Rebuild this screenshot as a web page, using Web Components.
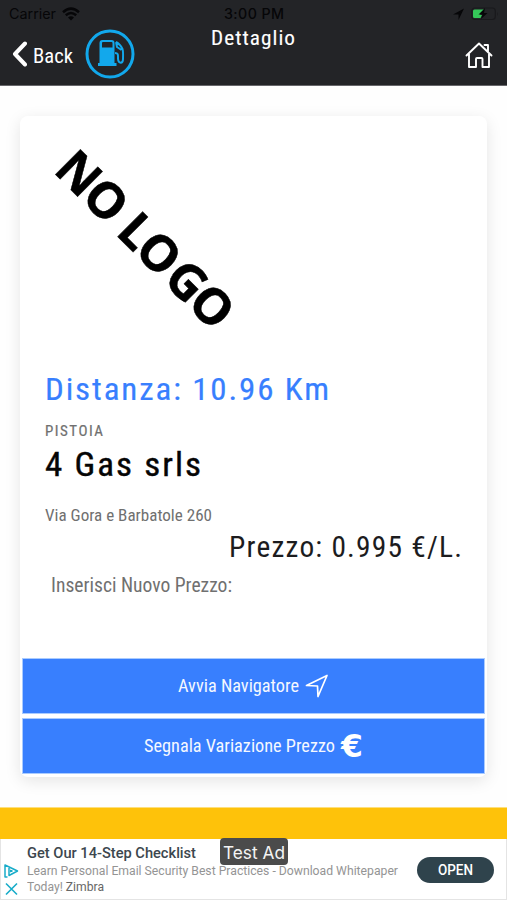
<!DOCTYPE html>
<html lang="it">
<head>
<meta charset="utf-8">
<title>Dettaglio</title>
<style>
html,body{margin:0;height:900px;overflow:hidden;background:#fefefe}
</style>
</head>
<body>
<station-page></station-page>
<script>
const define = (name, html, ready) => customElements.define(name, class extends HTMLElement {
  connectedCallback() {
    if (this.shadowRoot) return;
    const t = document.createElement('template');
    t.innerHTML = html;
    this.attachShadow({mode: 'open'}).append(t.content.cloneNode(true));
    if (ready) ready(this);
  }
});

/* One line of text condensed horizontally to the width given in "w". */
define('fit-line', `<style>
:host{display:block;white-space:pre;height:var(--lh,1.2em);line-height:var(--lh,1.2em);font-family:"Roboto Condensed",Roboto,sans-serif}
span{display:inline-block;transform-origin:0 50%}
</style><span><slot></slot></span>`, el => {
  const w = +el.getAttribute('w'), s = el.shadowRoot.querySelector('span');
  const fit = () => {
    s.style.transform = 'none';
    el.style.width = w + 'px';
    const ls = parseFloat(getComputedStyle(el).letterSpacing) || 0;
    s.style.transform = 'scaleX(' + w / (s.getBoundingClientRect().width - ls) + ')';
  };
  fit();
  requestAnimationFrame(fit);
});

define('status-bar', `<style>
:host{display:flex;height:27px;align-items:center;color:#060608;padding:0 8px 0 9px;box-sizing:border-box}
fit-line{font-size:14px;--lh:27px;font-family:Inter,sans-serif}
.wifi{margin-left:6px}.time{margin-left:144px;font-weight:500;letter-spacing:.4px}
.loc{margin-left:170px}.bat{margin-left:7px}
svg{display:block;flex:none}
</style>
<fit-line w="47">Carrier</fit-line>
<svg class="wifi" width="18" height="14" viewBox="0 0 18 14" fill="none" stroke="currentColor" stroke-width="2.5"><path d="M1 5.2Q9-2 17 5.2M3.8 8.2Q9 3.7 14.2 8.2"/><path d="M6 10.6Q9 8 12 10.6L9 13.5z" fill="currentColor" stroke="none"/></svg>
<fit-line class="time" w="60">3:00 PM</fit-line>
<svg class="loc" width="11" height="12" viewBox="0 0 11 12"><path d="M0 6.5 11 .5 5.5 12V6.5z" fill="currentColor"/></svg>
<svg class="bat" width="28" height="14" viewBox="0 0 28 14"><rect x=".8" y="1" width="23.5" height="11.5" rx="3" fill="none" stroke="#19191c" stroke-width="1.2"/><path d="M3.5 2.5H13L9 8h2l-1.500 3H3.500q-1.500 0-1.500-1.500V4q0-1.500 1.500-1.500z" fill="#35c759"/><path d="M14 1 7.500 7.500h4L10 12l6.500-6H13z" fill="#060608"/><path d="M26 5v4q1.500-2 0-4z" fill="#19191c"/></svg>`);

define('app-header', `<style>
:host{display:block;height:86px;background:#232427;color:#fff;border-bottom:1px solid #66666a;box-sizing:border-box}
.row{display:grid;grid-template-columns:211px 1fr 30px;height:58px;padding-right:13px}
.left{display:flex;align-items:center;padding:0 0 4px 12px}
.back{margin:3px 0 0 6px;font-size:20.5px;--lh:30px}
.logo{margin-left:12px}
.title{font-size:20.5px;letter-spacing:1px;--lh:24px;margin-top:-1px;-webkit-text-stroke:.12px}
.home{align-self:center;margin-top:-2px}
svg{display:block;flex:none}
</style>
<status-bar></status-bar>
<div class="row">
<div class="left">
<svg width="15" height="26" viewBox="0 0 15 26" fill="none" stroke="#fff" stroke-width="4" stroke-linecap="round" stroke-linejoin="round"><path d="M13 2.500 3 13 13 23.500"/></svg>
<fit-line class="back" w="40">Back</fit-line>
<svg class="logo" width="50" height="50" viewBox="0 0 50 50"><circle cx="25" cy="25" r="23" fill="none" stroke="#12a8ec" stroke-width="3"/><g fill="#12a8ec"><path fill-rule="evenodd" d="M14.500 14q0-3 3-3h9q3 0 3 3v21h-15zM17 14v4.500h10.500V14q0-1-1-1h-8.500q-1 0-1 1z"/><path d="M13 34h18.500v3H13z"/></g><path d="M31 13q4 2 6.500 7 .8 2 .5 10c0 5-4.500 5-5 0 0-4 .5-6-3-6M31 13l1 5 4.500 3" fill="none" stroke="#12a8ec" stroke-width="2"/></svg>
</div>
<fit-line class="title" w="84">Dettaglio</fit-line>
<svg class="home" width="30" height="30" viewBox="0 0 30 30" fill="none" stroke="#fff" stroke-width="1.900" stroke-linejoin="round" stroke-linecap="round"><path d="M2.500 15.500 15 3.500l12.500 12M5 14v13h7v-8q0-1 1-1h4.500q1 0 1 1v8H25V14M20.500 5h3.500v7"/></svg>
</div>`);

define('no-logo', `<style>
:host{display:block;width:210px;height:210px}
svg{display:block;overflow:visible}
text{font:bold 49.500px "Open Sans","Noto Sans",sans-serif;stroke:#000;stroke-width:.5px}
</style>
<svg width="210" height="210"><text transform="translate(6.500 40.500) rotate(45)" x="1 39.800 80 89.200 114.800 156 189.900">NO LOGO</text></svg>`);

define('action-button', `<style>
:host{display:flex;height:54px;align-items:center;justify-content:center;background:#387ffe;color:#f4f8ff;box-shadow:0 0 0 1px #a9cbff;font-size:18.700px;--lh:55px}
</style><slot></slot>`);

define('station-card', `<style>
:host{display:flex;flex-direction:column;margin:30px 20px 0;height:661px;border-radius:8px;background:#fff;box-shadow:0 4px 16px rgba(0,0,0,.10);box-sizing:border-box;padding:14px 3px 4px}
.body{display:flex;flex-direction:column;padding:0 22px;height:529px;box-sizing:border-box}
.dist{font-size:31.500px;letter-spacing:1.800px;color:#387ffe;--lh:38px;margin-top:31px;-webkit-text-stroke:.2px}
.city{font-size:15px;letter-spacing:1.500px;color:#707070;--lh:20px;margin-top:12px;-webkit-text-stroke:.2px}
.name{font-size:34px;letter-spacing:2px;color:#050505;--lh:40px;margin-top:3px;-webkit-text-stroke:.4px}
.addr{font-size:17px;color:#707070;--lh:22px;margin-top:20px}
.price{font-size:29px;letter-spacing:1.200px;color:#1c1c1e;--lh:36px;margin:3px 0 0 184px}
.ins{font-size:19.600px;color:#707070;--lh:26px;margin:8px 0 0 6px}
.btns{display:flex;flex-direction:column;gap:6px;margin-top:1px}
svg{display:block}
.arrow{margin-left:6px}.euro{font:bold 31.500px/55px "DejaVu Sans",sans-serif;margin-left:6px;color:#fff;width:22px;height:54px}
</style>
<div class="body">
<no-logo></no-logo>
<fit-line class="dist" w="284">Distanza: 10.96 Km</fit-line>
<fit-line class="city" w="58">PISTOIA</fit-line>
<fit-line class="name" w="156">4 Gas srls</fit-line>
<fit-line class="addr" w="167">Via Gora e Barbatole 260</fit-line>
<fit-line class="price" w="233">Prezzo: 0.995 €/L.</fit-line>
<fit-line class="ins" w="181">Inserisci Nuovo Prezzo:</fit-line>
</div>
<div class="btns">
<action-button><fit-line w="121">Avvia Navigatore</fit-line><svg class="arrow" width="24" height="24" viewBox="0 0 24 24" fill="none" stroke="#fff" stroke-width="1.700" stroke-linejoin="round"><path d="M1.500 11.500 22 1.500 13 22.500l-.5-10.500z"/></svg></action-button>
<action-button><fit-line w="191">Segnala Variazione Prezzo</fit-line><span class="euro">€</span></action-button>
</div>`);

define('ad-banner', `<style>
:host{display:grid;grid-template-columns:27px 1fr 77px;height:61px;background:#fff;position:relative;border:1px solid #e4e4e4;border-width:0 1px 1px;box-sizing:border-box;padding-right:12px}
fit-line{font-family:Roboto,sans-serif}
.icons{display:flex;flex-direction:column;gap:4px;padding:25px 0 0 3px}
.copy{padding-top:5px;margin-left:-1px}
.head{font-size:14.500px;font-weight:500;color:#3c474e;--lh:19px}
.d{font-size:12.300px;color:#949494;--lh:16px}
.d b{font-weight:400;color:#666}
.open{align-self:start;margin-top:18px;height:26px;border-radius:13px;background:#2f434c;color:#fff;display:flex;justify-content:center;font-size:14px;font-weight:500;--lh:26px}
.tag{position:absolute;left:219px;top:-1px;width:68px;height:27px;border-radius:4px;background:#4b4b4b;color:#f4f4f4;display:flex;justify-content:center;font-size:17.500px;--lh:29px}
.tag fit-line{font-family:Inter,sans-serif}
svg{display:block}
</style>
<div class="icons">
<svg width="15" height="14" viewBox="0 0 15 14" fill="none" stroke="#18acc9" stroke-width="1.500" stroke-linejoin="round"><path d="M3.500 13H1V1l12.500 6L5 11.500V4"/><path d="M6.500 6 8.500 7 6.500 8z" fill="#18acc9" stroke-width="1"/></svg>
<svg width="15" height="14" viewBox="0 0 15 14" stroke="#18acc9" stroke-width="1.600"><path d="M2 1.500 13 12.500M13 1.500 2 12.500"/></svg>
</div>
<div class="copy">
<fit-line class="head" w="169">Get Our 14-Step Checklist</fit-line>
<fit-line class="d" w="371">Learn Personal Email Security Best Practices - Download Whitepaper</fit-line>
<fit-line class="d" w="77">Today! <b>Zimbra</b></fit-line>
</div>
<div class="open"><fit-line w="35">OPEN</fit-line></div>
<div class="tag"><fit-line w="62">Test Ad</fit-line></div>`);

define('station-page', `<style>
:host{display:flex;flex-direction:column;width:507px;height:900px;background:#fefefe;overflow:hidden}
.strip{height:32px;margin-top:auto;background:#fec20a;border-top:1px solid #fddf7d;box-sizing:border-box;flex:none}
app-header,ad-banner,station-card{flex:none}
</style>
<app-header></app-header>
<station-card></station-card>
<div class="strip"></div>
<ad-banner></ad-banner>`);
</script>
</body>
</html>
